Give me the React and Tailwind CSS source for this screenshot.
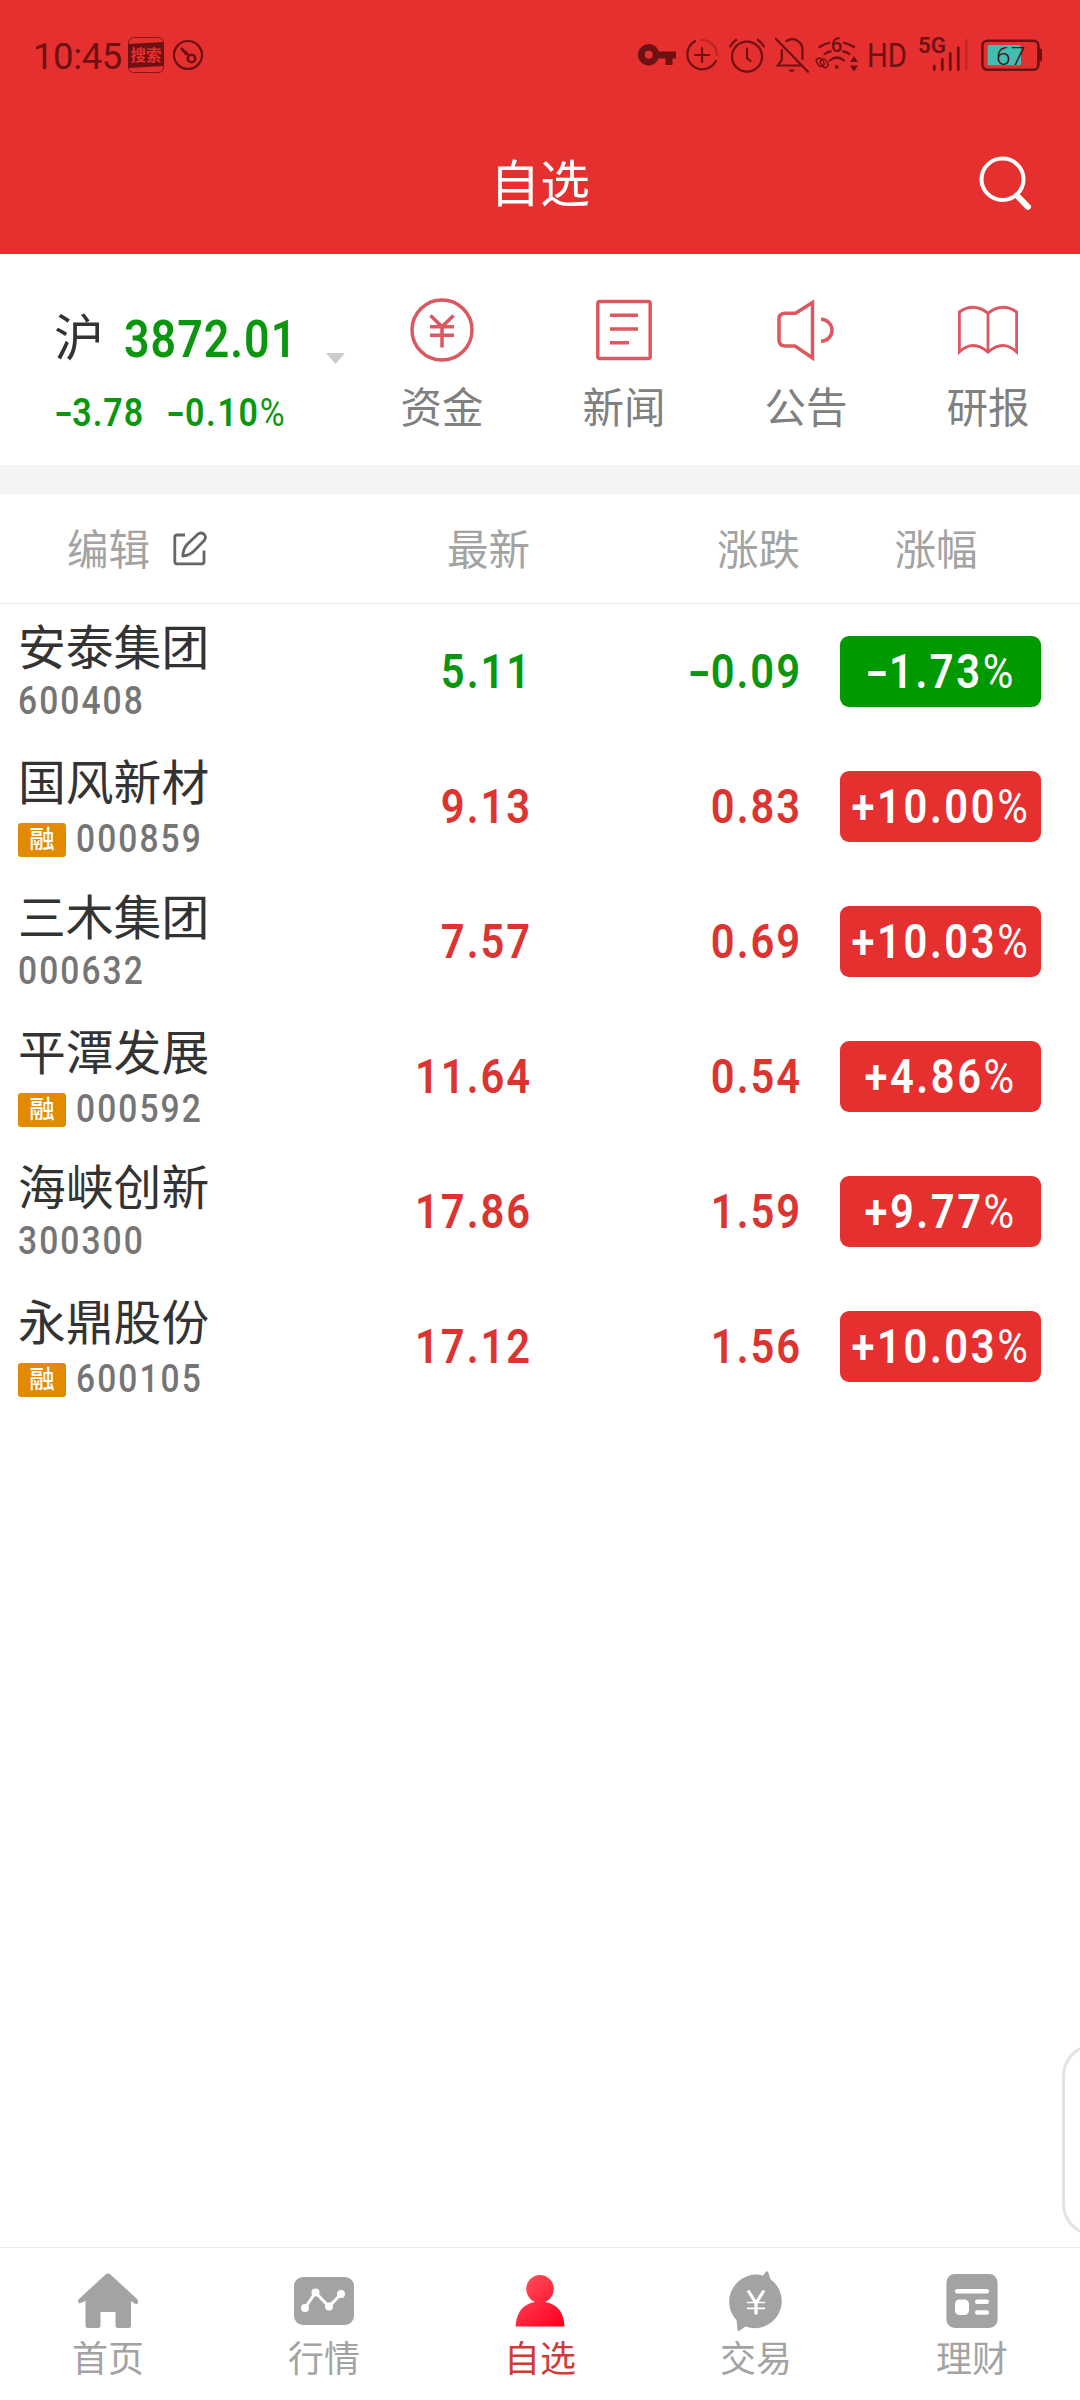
import React from 'react';
import clsx from 'clsx';

const stocks = [
  { name: '安泰集团', code: '600408', margin: false, price: '5.11', change: '-0.09', percent: '-1.73%' },
  { name: '国风新材', code: '000859', margin: true, price: '9.13', change: '0.83', percent: '+10.00%' },
  { name: '三木集团', code: '000632', margin: false, price: '7.57', change: '0.69', percent: '+10.03%' },
  { name: '平潭发展', code: '000592', margin: true, price: '11.64', change: '0.54', percent: '+4.86%' },
  { name: '海峡创新', code: '300300', margin: false, price: '17.86', change: '1.59', percent: '+9.77%' },
  { name: '永鼎股份', code: '600105', margin: true, price: '17.12', change: '1.56', percent: '+10.03%' },
];

// Condensed figures, with a wide minus sign and a light percent sign
const Num = ({ children, className }) => {
  const negative = children.startsWith('-');
  const percent = children.endsWith('%');
  const digits = children.replace('-', '').replace('%', '');
  return (
    <span className={clsx("inline-block whitespace-nowrap font-['Roboto'] leading-none scale-x-[0.86]", className)}>
      {negative && <span className="mr-[0.14em] inline-block origin-left scale-x-[1.55]">-</span>}
      {digits}
      {percent && <span className="font-normal">%</span>}
    </span>
  );
};

const StatusBar = () => (
  <div className="flex h-[110px] items-center pr-[38px] pl-[33px] text-[#6e1113]">
    <span className="mt-[5px] w-[95px] font-['Roboto'] text-[36.5px] leading-none tracking-[-0.4px]">10:45</span>
    <svg width="36" height="36" viewBox="0 0 36 36">
      <rect x="0.5" y="0.5" width="35" height="35" rx="5" fill="none" stroke="currentColor" strokeWidth="0.8" />
      <path d="M0 7 L36 5 V29 L0 31 Z" fill="currentColor" />
      <text x="18" y="23.5" textAnchor="middle" fontSize="15.5" fontWeight="700" fill="#e62f2f" fontFamily="'Noto Sans CJK SC', sans-serif">搜索</text>
    </svg>
    <svg className="ml-[9px]" width="30" height="32" viewBox="0 0 30 32" fill="none" stroke="currentColor">
      <circle cx="15" cy="16" r="14" strokeWidth="2.2" />
      <circle cx="18.5" cy="19.5" r="3.8" strokeWidth="2.6" />
      <path d="M15.5 16.500 L8 9 M9 12.800 L11.500 10.500 M11.800 15.600 L14.600 12.800" strokeWidth="2.4" />
    </svg>

    <svg className="ml-auto" width="38" height="40" viewBox="0 0 38 40" fill="currentColor">
      <path fillRule="evenodd" d="M10.7 9 A10.7 10.7 0 1 0 20.6 23.5 H27.5 V30 H34.5 V23.5 H38 V16.5 H20.8 A10.7 10.7 0 0 0 10.7 9 Z M10.7 15.7 A4 4 0 1 1 10.7 23.7 A4 4 0 1 1 10.7 15.7 Z" />
    </svg>
    <svg className="ml-[10px]" width="32" height="40" viewBox="0 0 32 40" fill="none" stroke="currentColor" strokeWidth="2.2" strokeLinecap="round">
      <path d="M9 6.2 A15 15 0 1 0 29.8 26" />
      <path d="M16 5 A15 15 0 0 1 31 20" opacity="0.35" />
      <path d="M16 13 V27 M9 20 H23" />
    </svg>
    <svg className="ml-[11px]" width="36" height="40" viewBox="0 0 36 40" fill="none" stroke="currentColor" strokeWidth="2.2" strokeLinecap="round">
      <circle cx="18" cy="21.7" r="15" />
      <path d="M1.2 11.3 Q3.5 7.5 7 5 M29 5 Q32.5 7.5 34.8 11.3 M18 13.5 V23 L21.5 26" />
    </svg>
    <svg className="ml-[10px]" width="34" height="40" viewBox="0 0 34 40" fill="none" stroke="currentColor" strokeWidth="2.2" strokeLinecap="round">
      <path d="M1 4 L33 36.8 M11.5 6 C18 1.5 27.5 6 27.5 15 V24 M6.8 15 V25 L2.8 30.5 H26" />
      <path d="M13.5 34.5 A3.4 3.4 0 0 0 20 34.5 Z" fill="currentColor" stroke="none" />
    </svg>
    <svg className="ml-[7px] overflow-visible" width="42" height="40" viewBox="0 0 42 40" fill="none" stroke="currentColor" strokeWidth="2.2" strokeLinecap="round">
      <path d="M3.5 12 Q8 9 13.3 7.7 M28 7.7 Q33.5 9 38 12 M8.5 19 Q11 17 14.7 16.3 M27 16.3 Q31 17 33.5 19 M13.8 25.5 Q21 19.5 28 25.5" />
      <circle cx="20.7" cy="32" r="2" fill="currentColor" stroke="none" />
      <path d="M38 21 L42 27 H34 Z M38 36.7 L42 30.5 H34 Z" fill="currentColor" stroke="none" />
      <g strokeWidth="1.4">
        <rect x="1.2" y="22.8" width="6" height="9" rx="3" transform="rotate(-35 4.2 27.3)" />
        <rect x="5.2" y="23.8" width="6" height="9" rx="3" transform="rotate(-35 8.2 28.3)" />
      </g>
      <text x="20.7" y="17.3" textAnchor="middle" fontSize="20.5" stroke="none" fill="currentColor" fontWeight="500" fontFamily="Roboto, sans-serif">6</text>
    </svg>
    <svg className="ml-[10px] overflow-visible" width="40" height="40" viewBox="0 0 40 40">
      <text x="-1" y="32" fontSize="33.5" fontWeight="400" fill="currentColor" textLength="40" lengthAdjust="spacingAndGlyphs" fontFamily="Roboto, sans-serif">HD</text>
    </svg>
    <svg className="ml-[10px] overflow-visible" width="50" height="40" viewBox="0 0 50 40" stroke="currentColor" strokeWidth="2.8" strokeLinecap="round">
      <text x="0" y="18.3" fontSize="22.5" fontWeight="600" stroke="none" fill="currentColor" textLength="28" lengthAdjust="spacingAndGlyphs" fontFamily="Roboto, sans-serif">5G</text>
      <path d="M16.3 31 V34.5 M24.3 24.5 V34.5 M32.3 18.5 V34.5 M40.3 13 V34.5" />
      <path d="M48.3 5.5 V34.5" opacity="0.25" />
    </svg>
    <svg className="ml-[13px]" width="61" height="40" viewBox="0 0 61 40">
      <rect x="1.4" y="5.8" width="56" height="29" rx="5" fill="none" stroke="currentColor" strokeWidth="2.6" />
      <path d="M58 13.5 H59.5 Q61 13.5 61 15 V25 Q61 26.5 59.5 26.5 H58 Z" fill="currentColor" />
      <rect x="6.7" y="10" width="33.3" height="20.3" rx="1.5" fill="#42bdb0" />
      <text x="29.7" y="30" textAnchor="middle" fontSize="26.5" fontWeight="300" fill="#4a1214" fontFamily="Roboto, sans-serif">67</text>
    </svg>
  </div>
);

const Header = () => (
  <header className="h-[254px] bg-[#e62f2f]">
    <StatusBar />
    <div className="grid h-[146px] grid-cols-[1fr_auto_1fr] items-center pr-[46px] pl-[46px]">
      <span />
      <h1 className="mt-1 text-[50px] leading-none font-normal text-white">自选</h1>
      <svg className="justify-self-end" width="56" height="58" viewBox="0 0 56 58" fill="none" stroke="white">
        <ellipse cx="24.5" cy="25.200" rx="21" ry="20.700" strokeWidth="4" />
        <path d="M39 41.500 L50 52.800" strokeWidth="6" strokeLinecap="round" />
      </svg>
    </div>
  </header>
);

const shortcuts = [
  {
    label: '资金',
    icon: (
      <>
        <circle cx="32" cy="32" r="30" />
        <path d="M20.5 17.5 L32 28.7 L43.5 17.5 M20 28.7 H44 M20 37.3 H44 M32 28.7 V49.5" />
      </>
    ),
  },
  {
    label: '新闻',
    icon: (
      <>
        <rect x="5.8" y="3.6" width="52.4" height="56.8" rx="2" />
        <path d="M18 17.3 H46 M18 31 H46 M18 44.7 H37" />
      </>
    ),
  },
  {
    label: '公告',
    icon: (
      <>
        <path d="M38.5 4.5 L21.5 15.2 H11.5 Q5 15.2 5 21 V42 Q5 48 11.5 48 H21 L38.5 60 Z" />
        <path d="M47 21.3 A11 11 0 0 1 47 43.3" />
      </>
    ),
  },
  {
    label: '研报',
    icon: (
      <path strokeWidth="2.8" d="M32 15.3 Q18 4 3.4 14 V54 Q17 41 32 54.3 Q47 41 60.6 54 V14 Q46 4 32 15.3 V54.3" />
    ),
  },
];

const IndexPanel = () => (
  <section className="flex h-[211px]">
    <div className="w-[351px] pt-[58px] pl-[54px]">
      <div className="flex h-[50px] items-center">
        <span className="mt-1 text-[50px] leading-none text-[#333]">沪</span>
        <Num className="mt-[6px] ml-[20px] w-[180px] origin-left text-[52px] font-semibold tracking-[1.2px] text-[#0a970f]">3872.01</Num>
        <svg className="mt-[43px] ml-[22px] shrink-0" width="19" height="11" viewBox="0 0 19 11">
          <path d="M0 0 H19 L9.5 11 Z" fill="#ccc" />
        </svg>
      </div>
      <div className="mt-[31px] flex">
        <Num className="w-[112px] origin-left text-[39.5px] font-semibold tracking-[1.2px] text-[#0a970f]">-3.78</Num>
        <Num className="origin-left text-[39.5px] font-semibold tracking-[2px] text-[#0a970f]">-0.10%</Num>
      </div>
    </div>
    {shortcuts.map((item) => (
      <div key={item.label} className="flex w-[182px] flex-col items-center pt-11">
        <svg width="64" height="64" viewBox="0 0 64 64" fill="none" stroke="#dc575f" strokeWidth="3.5">
          {item.icon}
        </svg>
        <span className="mt-[26px] text-[41.5px] leading-none text-[#808080]">{item.label}</span>
      </div>
    ))}
  </section>
);

const TableHead = () => (
  <div className="flex h-[110px] items-center border-b border-[#ebebeb] text-[41.5px] leading-none text-[#a3a3a3]">
    <div className="flex w-[300px] items-center pl-[67px]">
      <span className="mt-1">编辑</span>
      <svg className="ml-[23px]" width="35" height="35" viewBox="0 0 35 35" fill="none" stroke="#666" strokeWidth="2.8" strokeLinejoin="round">
        <path d="M12 4 H4 Q1.8 4 1.8 6.2 V30.5 Q1.8 32.8 4 32.8 H28.8 Q31 32.8 31 30.5 V19.5" />
        <path d="M9.8 25 Q10.2 18 14 13.5 L24.5 3.5 Q27.5 0.8 30.8 3 Q34 6 31 9.8 L21 20 Q16.5 24.5 9.8 25 Z" />
      </svg>
    </div>
    <span className="mt-1 w-[230px] text-right">最新</span>
    <span className="mt-1 w-[270px] text-right">涨跌</span>
    <span className="mt-1 ml-[40px] w-[192px] text-center">涨幅</span>
  </div>
);

const StockRow = ({ stock }) => {
  const down = stock.change.startsWith('-');
  const color = down ? 'text-[#0a970f]' : 'text-[#dc3431]';
  return (
    <div className="flex h-[135px] items-center">
      <div className="h-full w-[300px] pt-[21px] pl-[18px]">
        <p className="text-[47.8px] leading-[48px] text-[#333]">{stock.name}</p>
        <div className={clsx('flex items-center', stock.margin ? 'mt-[12px]' : 'mt-[9px]')}>
          {stock.margin && (
            <span className="mr-[10px] flex h-[34px] w-[48px] items-center justify-center rounded-[3px] bg-[#e28b00] pt-[1px] text-[25.5px] leading-none font-medium text-white">
              融
            </span>
          )}
          <Num className="origin-left text-[39px] leading-[34px] font-medium tracking-[2.4px] text-[#757575]">{stock.code}</Num>
        </div>
      </div>
      <div className="mt-[2px] w-[232px] text-right">
        <Num className={clsx('origin-right text-[48.5px] font-semibold tracking-[2.3px]', color)}>{stock.price}</Num>
      </div>
      <div className="mt-[2px] w-[270px] text-right">
        <Num className={clsx('origin-right text-[48.5px] font-semibold tracking-[2.3px]', color)}>{stock.change}</Num>
      </div>
      <div
        className={clsx(
          'ml-[38px] flex h-[71px] w-[201px] items-center justify-center rounded-[9px] pt-[2px]',
          down ? 'bg-[#009900]' : 'bg-[#e62f2f]'
        )}
      >
        <Num className="text-[48.5px] font-semibold tracking-[3px] text-white">{stock.percent}</Num>
      </div>
    </div>
  );
};

const tabs = [
  {
    label: '首页',
    icon: (
      <path d="M27 4 Q30 1.2 33 4 L59 28 Q61.5 31 59 33 Q57.5 33.6 53 30 V54.5 Q53 57 50.5 57 H40 Q37.5 57 37.5 54.5 V41 H22.5 V54.5 Q22.5 57 20 57 H10 Q7.5 57 7.5 54.5 V30 Q3 31.5 1.5 32.5 Q-1 30.5 1 28 Z" />
    ),
  },
  {
    label: '行情',
    icon: (
      <>
        <rect x="0" y="6" width="60" height="48" rx="9" />
        <path d="M11 37 L21.5 21.5 L35 35.5 L47 23" fill="none" stroke="#fff" strokeWidth="3" />
        <g fill="#fff">
          <circle cx="11" cy="37" r="4" />
          <circle cx="21.5" cy="21.5" r="4" />
          <circle cx="35" cy="35.5" r="4" />
          <circle cx="47" cy="23" r="4" />
        </g>
      </>
    ),
  },
  {
    label: '自选',
    active: true,
    icon: (
      <>
        <defs>
          <linearGradient id="user" x1="0.1" y1="0" x2="0.9" y2="1" gradientUnits="objectBoundingBox">
            <stop offset="0" stopColor="#ff525c" />
            <stop offset="1" stopColor="#ff0022" />
          </linearGradient>
        </defs>
        <path d="M30 4 A14 14 0 0 1 35 31 Q53.5 34 54.5 55.5 H5.500 Q7 34 25 31 A14 14 0 0 1 30 4 Z" fill="url(#user)" />
      </>
    ),
  },
  {
    label: '交易',
    icon: (
      <>
        <path d="M37 4.5 L40 0.7 Q41.5 -0.5 42.3 1.5 L44.5 8.2 A27 27 0 0 1 19.5 55.5 L13.500 59.8 Q11.8 60.5 11.5 58.5 L10.6 49.2 A27 27 0 0 1 37 4.5 Z" />
        <path d="M22 19.5 L30 32 L38 19.5 M30 32 V43.5" fill="none" stroke="#fff" strokeWidth="3.2" />
        <path d="M21 31.5 H39 M21 37.3 H39" fill="none" stroke="#fff" strokeWidth="1.7" />
      </>
    ),
  },
  {
    label: '理财',
    icon: (
      <>
        <rect x="4.4" y="3" width="51.2" height="54" rx="8.5" />
        <g fill="#fff">
          <rect x="13" y="18" width="34" height="4.5" rx="2.2" />
          <rect x="13" y="28.5" width="14" height="15.5" rx="4.5" />
          <rect x="33" y="28.5" width="14" height="4.5" rx="2.2" />
          <rect x="33" y="39.2" width="14" height="4.5" rx="2.2" />
        </g>
      </>
    ),
  },
];

const TabBar = () => (
  <nav className="flex h-[153px] border-t border-[#ebebeb]">
    {tabs.map((tab) => (
      <div key={tab.label} className="flex flex-1 flex-col items-center pt-[23px]">
        <svg className="overflow-visible" width="60" height="60" viewBox="0 0 60 60" fill="#a3a3a3">
          {tab.icon}
        </svg>
        <span className={clsx('mt-[11px] text-[36px] leading-none', tab.active ? 'text-[#d23a36]' : 'text-[#a3a3a3]')}>
          {tab.label}
        </span>
      </div>
    ))}
  </nav>
);

const App = () => {
  return (
    <div className="relative flex h-[2400px] w-[1080px] flex-col overflow-hidden bg-white font-['Roboto','Noto_Sans_CJK_SC',sans-serif]">
      <Header />
      <IndexPanel />
      <div className="h-[29px] shrink-0 bg-[#f4f4f4]" />
      <TableHead />
      <main className="flex-1">
        {stocks.map((stock) => (
          <StockRow key={stock.code} stock={stock} />
        ))}
      </main>
      <TabBar />

      {/* Floating drawer handle, mostly off screen */}
      <div className="absolute top-[2044px] left-[1062px] h-[192px] w-[80px] rounded-[32px] border-[3px] border-[#e3e3e3] bg-white" />
    </div>
  );
};

export default App;
